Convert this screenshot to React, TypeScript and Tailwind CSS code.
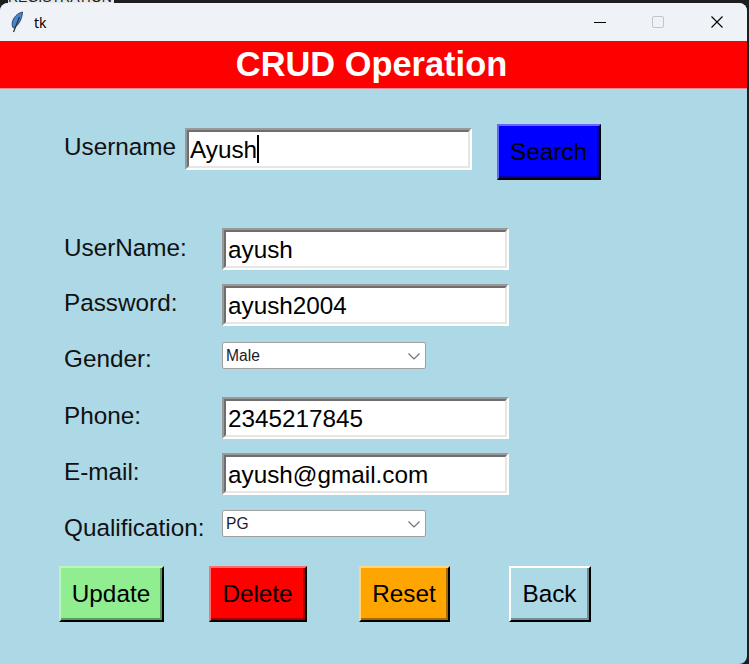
function Entry({ value, caret }: { value: string; caret?: boolean }) {
  return (
    <div className="relative w-full h-full border-t-2 border-l-2 border-t-[#999999] border-l-[#999999] border-b-2 border-r-2 border-b-white border-r-white">
      <div className="h-full border-t-2 border-l-2 border-t-[#6e6e6e] border-l-[#6e6e6e] border-b-2 border-r-2 border-b-[#e6e6e6] border-r-[#e6e6e6] bg-white">
        <input
          readOnly
          value={value}
          className={caret ? "w-full h-full pl-px pt-px text-[24.3px] text-black outline-none bg-transparent" : "w-full h-full pl-[2px] pt-px text-[24.3px] text-black outline-none bg-transparent"}
        />
      </div>
      {caret && <div className="absolute left-[70px] top-[5px] w-[2px] h-[28px] bg-black" />}
    </div>
  );
}

function Combo({ value }: { value: string }) {
  return (
    <div className="w-[204px] h-[27px] flex items-center justify-between pl-[3px] pr-[5px] bg-white border border-[#a0a0a0] rounded-[2px]">
      <span className="text-[15.6px] text-[#1a1a2e]">{value}</span>
      <svg width="12" height="7" viewBox="0 0 12 7" className="mt-px">
        <path d="M0.5 0.5 L6 6 L11.5 0.5" fill="none" stroke="#6b6b6b" strokeWidth="1.1" />
      </svg>
    </div>
  );
}

function Btn({ label, className }: { label: string; className: string }) {
  return (
    <button className={`h-[56px] pr-px border-t-2 border-l-2 border-b-2 border-r-2 border-b-black border-r-black text-[24.3px] text-black ${className}`}>
      {label}
    </button>
  );
}

export default function App() {
  return (
    <div className="relative w-[749px] h-[664px] overflow-hidden bg-[#1e1e1e] font-['Liberation_Sans',Arial,sans-serif]">
      {/* window behind, only its bottom edge shows */}
      <div className="h-[3px] w-[106px] ml-[8px] overflow-hidden flex items-end bg-[#e8e8e8]">
        <span className="text-[14px] leading-[14px] text-[#222222] -mb-[1px]">REGISTRATION</span>
      </div>
      <div className="w-[747px] h-[661px] flex flex-col rounded-t-[8px] rounded-br-[8px] overflow-hidden bg-[#add8e6]">
        {/* title bar */}
        <div className="h-[38px] shrink-0 flex items-center bg-[#eff3f8]">
          <svg width="14" height="22" viewBox="0 0 14 22" className="ml-[10px]">
            <path d="M12.5 1 C8 2 3 6 2.2 12 C2 14 2.3 16 3.5 17 C8 15 12 9 12.5 1 Z" fill="#4a86d0" stroke="#2b3a55" strokeWidth="0.9" />
            <path d="M9.5 6 L3.5 21" stroke="#30353d" strokeWidth="1.3" fill="none" />
          </svg>
          <span className="ml-[10px] text-[14px] text-black font-['Noto_Sans',sans-serif]">tk</span>
          <div className="ml-auto flex items-center">
            <div className="w-[12px] h-px bg-black mr-[46px]" />
            <div className="w-[12px] h-[12px] border border-[#c2c5c9] rounded-[2px] mr-[47px]" />
            <svg width="12" height="12" viewBox="0 0 12 12" className="mr-[24px]">
              <path d="M0.5 0.5 L11.5 11.5 M11.5 0.5 L0.5 11.5" stroke="#000000" strokeWidth="1.1" fill="none" />
            </svg>
          </div>
        </div>
        {/* heading */}
        <div className="h-[48px] shrink-0 flex items-center justify-center pr-[4px] bg-[#ff0000] text-white font-bold text-[34.4px] border-b border-[#e08a95]">
          CRUD Operation
        </div>
        {/* form */}
        <div className="flex-1 pl-[64px]">
          <div className="flex items-start pt-[35px]">
            <div className="w-[121px] pt-[9px] text-[24.3px] leading-[28px] text-[#111111]">Username</div>
            <div className="w-[287px] h-[42px] mt-[4px]">
              <Entry value="Ayush" caret />
            </div>
            <Btn label="Search" className="ml-[25px] w-[104px] bg-[#0000ff] border-t-[#6666ff] border-l-[#6666ff] shadow-[inset_-2px_-2px_0_#0000a6]" />
          </div>
          <div className="flex items-start mt-[48px]">
            <div className="w-[158px] pt-[6px] text-[24.3px] leading-[28px] text-[#111111]">UserName:</div>
            <div className="w-[287px] h-[42px]"><Entry value="ayush" /></div>
          </div>
          <div className="flex items-start mt-[14px]">
            <div className="w-[158px] pt-[5px] text-[24.3px] leading-[28px] text-[#111111]">Password:</div>
            <div className="w-[287px] h-[42px]"><Entry value="ayush2004" /></div>
          </div>
          <div className="flex items-start mt-[16px]">
            <div className="w-[158px] pt-[3px] text-[24.3px] leading-[28px] text-[#111111]">Gender:</div>
            <Combo value="Male" />
          </div>
          <div className="flex items-start mt-[24px]">
            <div className="w-[158px] pt-[5px] text-[24.3px] leading-[28px] text-[#111111]">Phone:</div>
            <div className="w-[287px] h-[42px]"><Entry value="2345217845" /></div>
          </div>
          <div className="flex items-start mt-[14px]">
            <div className="w-[158px] pt-[5px] text-[24.3px] leading-[28px] text-[#111111]">E-mail:</div>
            <div className="w-[287px] h-[42px]"><Entry value="ayush@gmail.com" /></div>
          </div>
          <div className="flex items-start mt-[15px]">
            <div className="w-[158px] pt-[4px] text-[24.3px] leading-[28px] text-[#111111]">Qualification:</div>
            <Combo value="PG" />
          </div>
          <div className="flex items-start mt-[24px] -ml-[5px]">
            <Btn label="Update" className="w-[105px] bg-[#90ee90] border-t-[#bcf5bc] border-l-[#bcf5bc] shadow-[inset_-2px_-2px_0_#5d9b5d]" />
            <Btn label="Delete" className="ml-[45px] w-[98px] bg-[#ff0000] border-t-[#ff6f6f] border-l-[#ff6f6f] shadow-[inset_-2px_-2px_0_#a60000]" />
            <Btn label="Reset" className="ml-[52px] w-[91px] bg-[#ffa500] border-t-[#ffd580] border-l-[#ffd580] shadow-[inset_-2px_-2px_0_#a66b00]" />
            <Btn label="Back" className="ml-[59px] w-[82px] bg-[#add8e6] border-t-white border-l-white shadow-[inset_-2px_-2px_0_#718d96]" />
          </div>
        </div>
      </div>
    </div>
  );
}
